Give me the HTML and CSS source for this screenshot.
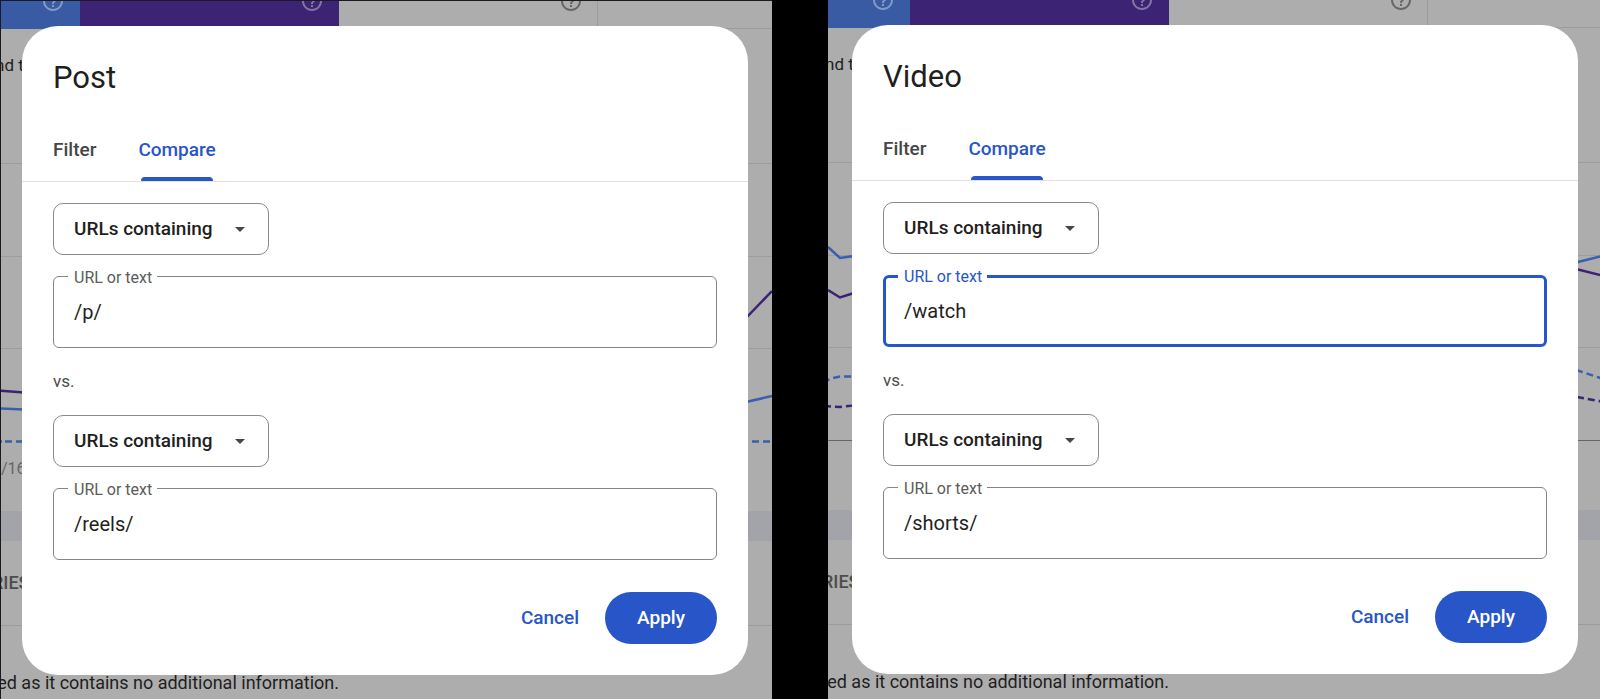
FILE: index.html
```html
<!DOCTYPE html>
<html lang="en">
<head>
    <meta charset="UTF-8">
    <meta name="viewport" content="width=device-width, initial-scale=1.0">
    <title>Compare URLs</title>
    <link rel="stylesheet" href="styles.css">
</head>
<body>

    <!-- icons used by both panels -->
    <svg class="symbols" aria-hidden="true">
        <symbol id="help" viewBox="0 0 24 24">
            <path fill="currentColor" d="M11 18h2v-2h-2v2zm1-16C6.480 2 2 6.480 2 12s4.480 10 10 10 10-4.480 10-10S17.520 2 12 2zm0 18c-4.410 0-8-3.590-8-8s3.590-8 8-8 8 3.590 8 8-3.590 8-8 8zm0-14c-2.210 0-4 1.790-4 4h2c0-1.100.9-2 2-2s2 .9 2 2c0 2-3 1.750-3 5h2c0-2.250 3-2.500 3-5 0-2.210-1.790-4-4-4z"/>
        </symbol>
        <symbol id="arrow" viewBox="0 0 10 5">
            <path fill="currentColor" d="M0 0h10L5 5z"/>
        </symbol>
    </svg>

    <main class="panels">
        <section class="panel panel-post">
            <div class="stage">
                <div class="report" aria-hidden="true">
                    <div class="cards">
                        <div class="card card-blue"><svg class="help"><use href="#help"/></svg></div>
                        <div class="card card-purple"><svg class="help"><use href="#help"/></svg></div>
                        <div class="card"><svg class="help"><use href="#help"/></svg></div>
                        <div class="card card-rest"></div>
                    </div>
                    <p class="intro">nd t</p>
                    <svg class="chart">
                        <line class="grid" x1="0" x2="100%" y1="72.5" y2="72.5"/>
                        <line class="grid" x1="0" x2="100%" y1="165.5" y2="165.5"/>
                        <line class="grid" x1="0" x2="100%" y1="257.5" y2="257.5"/>
                        <polyline class="line-purple" points="0,299.500 26,301.500"/>
                        <polyline class="line-blue" points="0,317.500 26,318.500"/>
                        <line class="line-blue dashed" x1="7" x2="26" y1="350.500" y2="350.500"/>
                        <line class="line-blue" x1="3" x2="4" y1="350.500" y2="350.500"/>
                        <text class="axis" x="3" y="383">/16</text>
                        <svg class="chart-end" x="100%">
                            <polyline class="line-purple" points="-26,227 0,200"/>
                            <polyline class="line-blue" points="-26,311 0,305"/>
                            <line class="line-blue dashed" x1="-20" x2="0" y1="350.500" y2="350.500"/>
                        </svg>
                    </svg>
                    <div class="band"></div>
                    <div class="dimensions">RIES</div>
                    <p class="note">ed as it contains no additional information.</p>
                </div>

                <form class="dialog" role="dialog" aria-labelledby="post-title">
                    <h2 class="title" id="post-title">Post</h2>
                    <div class="tabs" role="tablist">
                        <button type="button" class="tab" role="tab">Filter</button>
                        <button type="button" class="tab tab-active" role="tab" aria-selected="true">Compare</button>
                    </div>
                    <div class="content">
                        <div class="dropdown">
                            <select aria-label="First match type"><option>URLs containing</option></select>
                            <svg class="arrow"><use href="#arrow"/></svg>
                        </div>
                        <div class="field">
                            <label for="post-first">URL or text</label>
                            <input type="text" id="post-first" value="/p/">
                        </div>
                        <p class="versus">vs.</p>
                        <div class="dropdown">
                            <select aria-label="Second match type"><option>URLs containing</option></select>
                            <svg class="arrow"><use href="#arrow"/></svg>
                        </div>
                        <div class="field">
                            <label for="post-second">URL or text</label>
                            <input type="text" id="post-second" value="/reels/">
                        </div>
                        <div class="actions">
                            <button type="button" class="btn">Cancel</button>
                            <button type="button" class="btn btn-apply">Apply</button>
                        </div>
                    </div>
                </form>
            </div>
        </section>

        <section class="panel panel-video">
            <div class="stage">
                <div class="report" aria-hidden="true">
                    <div class="cards">
                        <div class="card card-blue"><svg class="help"><use href="#help"/></svg></div>
                        <div class="card card-purple"><svg class="help"><use href="#help"/></svg></div>
                        <div class="card"><svg class="help"><use href="#help"/></svg></div>
                        <div class="card card-rest"></div>
                    </div>
                    <p class="intro">nd t</p>
                    <svg class="chart">
                        <line class="grid" x1="0" x2="100%" y1="72.5" y2="72.5"/>
                        <line class="grid" x1="0" x2="100%" y1="165.5" y2="165.5"/>
                        <line class="grid" x1="0" x2="100%" y1="257.5" y2="257.5"/>
                        <line class="grid grid-base" x1="0" x2="100%" y1="350.500" y2="350.500"/>
                        <polyline class="line-blue" points="0,157 12,168 26,166"/>
                        <polyline class="line-purple" points="0,200 12,207.500 26,203"/>
                        <polyline class="line-blue dashed" points="-5,292 5,288 12,286.500 26,286.500"/>
                        <polyline class="line-purple dashed" points="-4,316 12,317 26,315.500"/>
                        <svg class="chart-end" x="100%">
                            <polyline class="line-blue" points="-26,172.500 0,166"/>
                            <polyline class="line-purple" points="-26,179 0,185.500"/>
                            <polyline class="line-blue dashed" points="-26,280 0,288.500"/>
                            <polyline class="line-purple dashed" points="-25,307 0,311.500"/>
                        </svg>
                    </svg>
                    <div class="band"></div>
                    <div class="dimensions">RIES</div>
                    <p class="note">ed as it contains no additional information.</p>
                </div>

                <form class="dialog" role="dialog" aria-labelledby="video-title">
                    <h2 class="title" id="video-title">Video</h2>
                    <div class="tabs" role="tablist">
                        <button type="button" class="tab" role="tab">Filter</button>
                        <button type="button" class="tab tab-active" role="tab" aria-selected="true">Compare</button>
                    </div>
                    <div class="content">
                        <div class="dropdown">
                            <select aria-label="First match type"><option>URLs containing</option></select>
                            <svg class="arrow"><use href="#arrow"/></svg>
                        </div>
                        <div class="field field-active">
                            <label for="video-first">URL or text</label>
                            <input type="text" id="video-first" value="/watch">
                        </div>
                        <p class="versus">vs.</p>
                        <div class="dropdown">
                            <select aria-label="Second match type"><option>URLs containing</option></select>
                            <svg class="arrow"><use href="#arrow"/></svg>
                        </div>
                        <div class="field">
                            <label for="video-second">URL or text</label>
                            <input type="text" id="video-second" value="/shorts/">
                        </div>
                        <div class="actions">
                            <button type="button" class="btn">Cancel</button>
                            <button type="button" class="btn btn-apply">Apply</button>
                        </div>
                    </div>
                </form>
            </div>
        </section>
    </main>

</body>
</html>
```
FILE: styles.css
```css
* {
    box-sizing: border-box;
}

body {
    margin: 0;
    background-color: #000;
    color: #1f1f1f;
    font-family: Roboto, "Liberation Sans", sans-serif;
}

h2, p {
    margin: 0;
}

button, input, select {
    font-family: inherit;
}

.symbols {
    display: none;
}

.panels {
    display: grid;
    grid-template-columns: 1fr 1fr;
    gap: 56px;
    min-height: 100vh;
}

.panel {
    min-width: 0;
    max-height: 100vh;
    overflow: hidden;
    background-color: #adadad;
}

.panel-post {
    border-top: 1px solid #1c1a20;
    border-left: 1px solid #1c1a20;
}

/* both reports run a little past the panel edge */
.panel-post .stage {
    margin-left: -3px;
}

.panel-video .stage {
    margin-right: -2px;
}

/* the dialog lies over the report in the same grid cell */
.stage {
    display: grid;
    grid-template-columns: minmax(0, 1fr);
}

.report, .dialog {
    grid-area: 1 / 1;
}

/* report behind the dialog */
.report {
    overflow: hidden;
}

.cards {
    display: flex;
    height: 28px;
    border-bottom: 1px solid #9c9c9c;
}

.card {
    display: flex;
    justify-content: flex-end;
    width: 259px;
    height: 28px;
    padding-right: 14px;
    border-right: 1px solid #9c9c9c;
    color: #666;
}

.card-blue {
    width: 82px;
    padding-right: 15px;
    border: none;
    background-color: #385ba3;
    color: #8499c3;
}

.card-purple {
    padding-right: 15px;
    border: none;
    background-color: #3c2373;
    color: #8575a5;
}

.card-rest {
    flex: 1;
    border: none;
}

.help {
    width: 24px;
    height: 24px;
    margin-top: -12px;
}

.intro {
    padding: 26px 0 16px;
    font-size: 17px;
    line-height: 20px;
    text-indent: -3px;
}

.chart {
    display: block;
    width: 100%;
    height: 420px;
}

.chart-end {
    overflow: visible;
}

.grid {
    stroke: #9d9d9d;
    stroke-width: 1;
}

.grid-base {
    stroke: #666;
}

.line-blue, .line-purple {
    fill: none;
    stroke: #385fb0;
    stroke-width: 2.5;
}

.line-purple {
    stroke: #3b2275;
}

.dashed {
    stroke-dasharray: 7 4;
}

.axis {
    fill: #666;
    font-size: 16px;
}

.band {
    height: 30px;
    background-color: #a2a4aa;
}

.dimensions {
    border-bottom: 1px solid #9c9c9c;
    color: #4c4c4c;
    font-size: 18px;
    font-weight: 500;
    line-height: 84px;
    text-indent: -6px;
}

.note {
    display: flex;
    justify-content: flex-end;
    width: 341px;
    padding: 47px 0 7px;
    font-size: 18px;
    line-height: 20px;
    white-space: nowrap;
}

/* dialog */
.dialog {
    align-self: start;
    margin: 25px 24px 0;
    padding: 31px 0;
    border-radius: 36px;
    background-color: #fff;
}

.title {
    padding: 0 31px;
    font-size: 31px;
    font-weight: 400;
    line-height: 42px;
}

.tabs {
    display: flex;
    gap: 42px;
    margin-top: 18px;
    padding: 0 31px;
    border-bottom: 1px solid #e1e1e1;
}

.tab {
    position: relative;
    height: 64px;
    padding: 0;
    border: none;
    background: none;
    color: #444746;
    font-size: 19px;
    font-weight: 500;
    cursor: pointer;
}

.tab-active {
    color: #2856c8;
}

.tab-active::after {
    content: "";
    position: absolute;
    right: 3px;
    bottom: 0;
    left: 3px;
    height: 4px;
    border-radius: 4px 4px 0 0;
    background-color: #2856c8;
}

.content {
    padding: 21px 31px 0;
}

.dropdown {
    display: grid;
    align-items: center;
    width: 216px;
    margin-bottom: 21px;
}

.dropdown select {
    grid-area: 1 / 1;
    appearance: none;
    height: 52px;
    padding: 0 20px 2px;
    border: 1px solid #8a8a8a;
    border-radius: 10px;
    background-color: #fff;
    color: #1f1f1f;
    font-size: 19px;
    font-weight: 500;
    cursor: pointer;
}

.arrow {
    grid-area: 1 / 1;
    justify-self: end;
    width: 10px;
    height: 5px;
    margin-right: 24px;
    color: #444746;
    pointer-events: none;
}

.field {
    position: relative;
}

.field label {
    position: absolute;
    top: -8px;
    left: 15px;
    padding: 0 5px 0 6px;
    background-color: #fff;
    color: #5a5c5b;
    font-size: 16px;
    line-height: 20px;
}

.field input {
    display: block;
    width: 100%;
    height: 72px;
    padding: 0 20px;
    border: 1px solid #858585;
    border-radius: 6px;
    background-color: #fff;
    color: #1f1f1f;
    font-size: 20px;
}

.field-active label {
    color: #2856c8;
}

.field-active input {
    padding: 0 18px;
    border: 3px solid #2856c8;
}

.versus {
    color: #4a4c4b;
    font-size: 17px;
    line-height: 67px;
}

.actions {
    display: flex;
    justify-content: flex-end;
    gap: 26px;
    margin-top: 32px;
}

.btn {
    height: 52px;
    padding: 0 0 2px;
    border: none;
    border-radius: 26px;
    background: none;
    color: #2856c8;
    font-size: 19px;
    font-weight: 500;
    cursor: pointer;
}

.btn-apply {
    padding: 0 32px 2px;
    background-color: #2856c8;
    color: #fff;
}
```
